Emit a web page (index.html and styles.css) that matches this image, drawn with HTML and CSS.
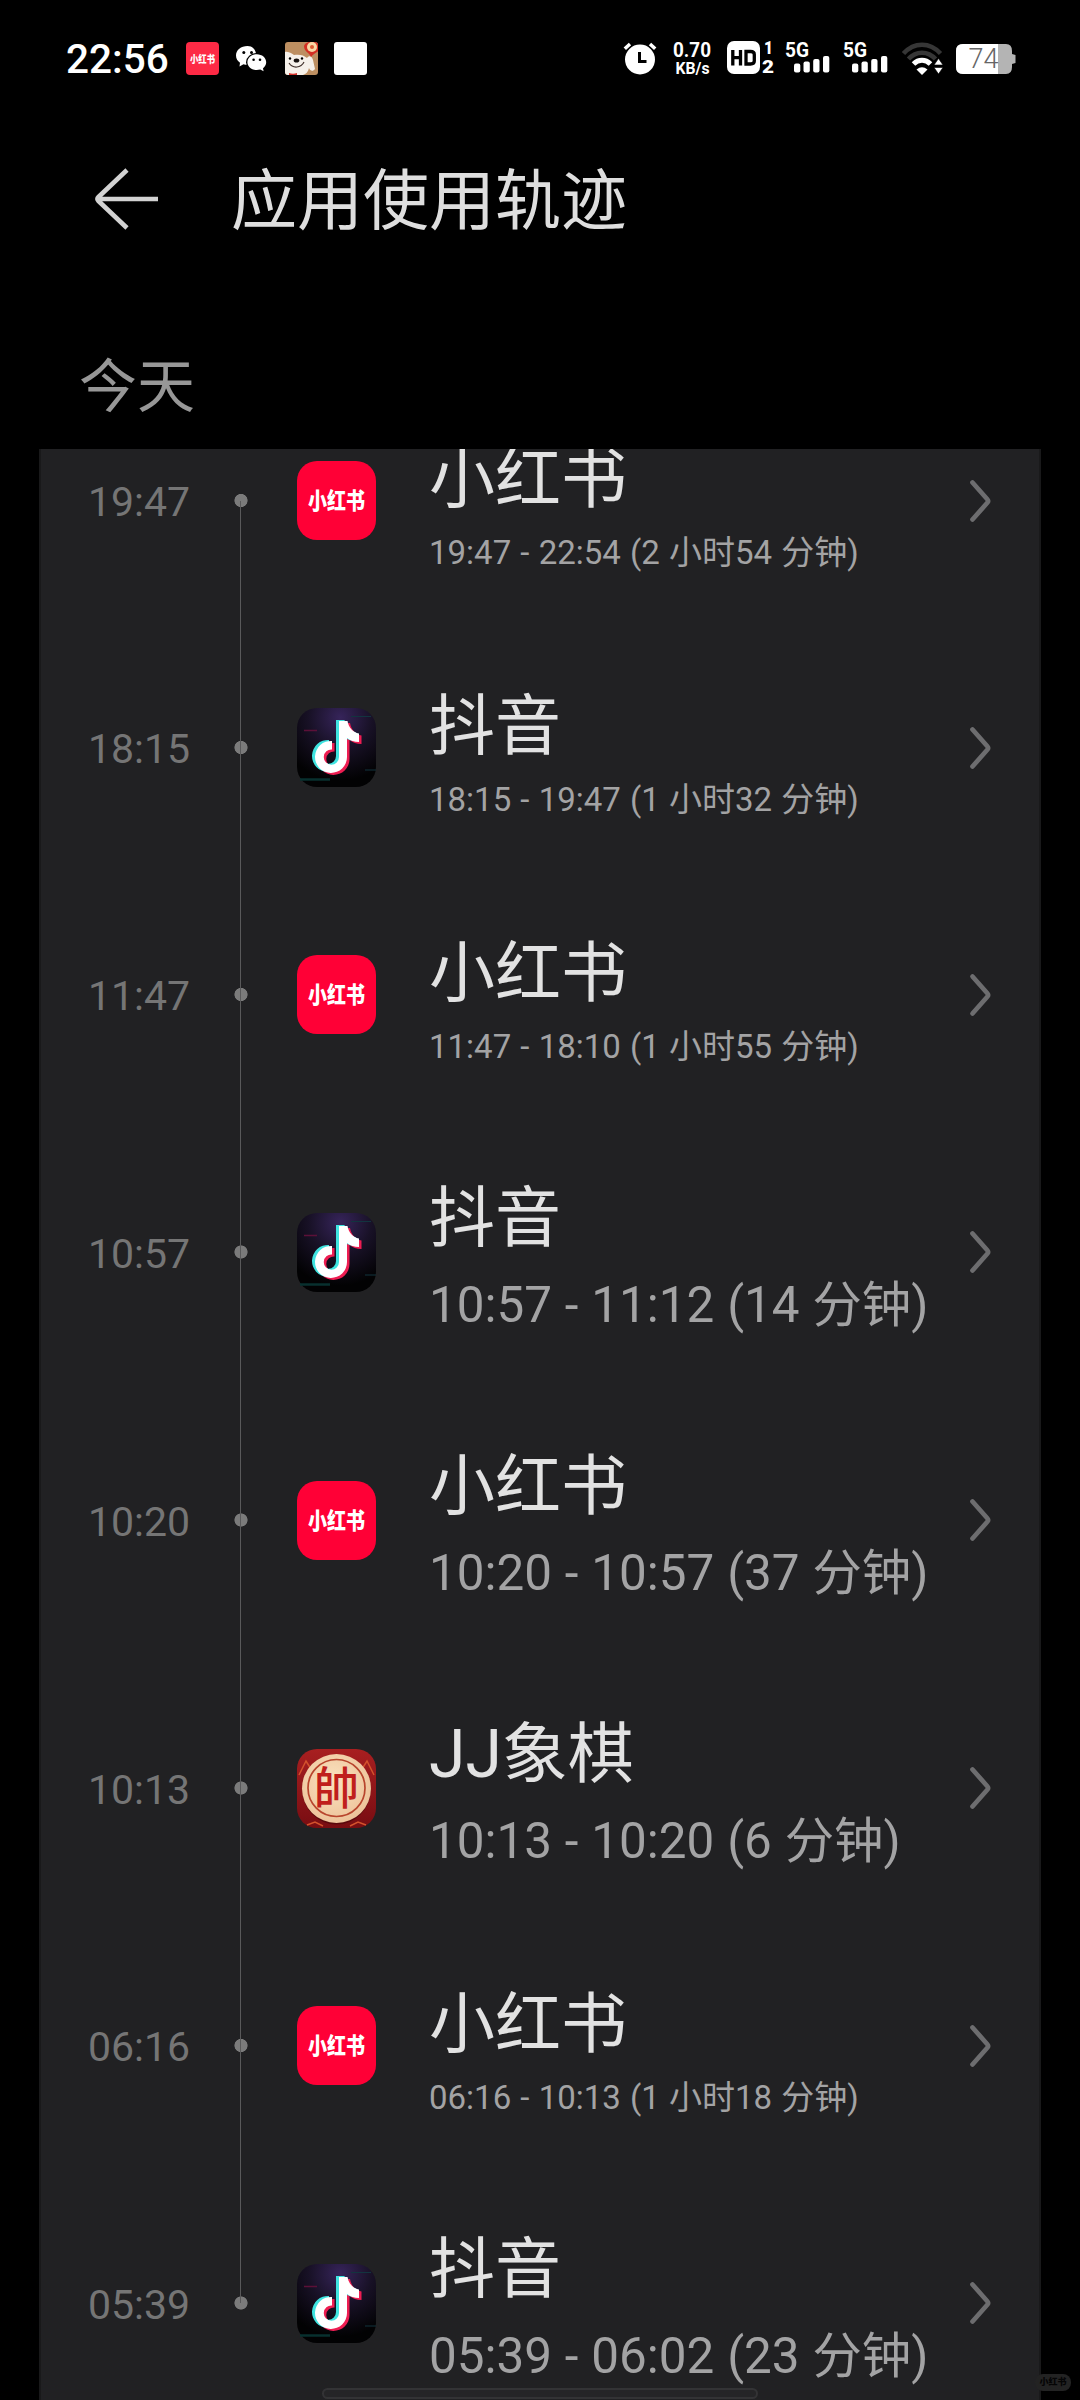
FILE: index.html
```html
<!DOCTYPE html>
<html lang="zh-CN">
<head>
<meta charset="utf-8">
<title>应用使用轨迹</title>
<link rel="stylesheet" href="styles.css">
</head>
<body>
<svg class="defs" width="0" height="0" aria-hidden="true">
  <defs>
    <radialGradient id="dyBg" cx="0.55" cy="0.12" r="0.8">
      <stop offset="0" stop-color="#36245a"/>
      <stop offset="0.5" stop-color="#181126"/>
      <stop offset="1" stop-color="#020203"/>
    </radialGradient>
    <radialGradient id="wood" cx="0.45" cy="0.4" r="0.6">
      <stop offset="0" stop-color="#fbe3c0"/>
      <stop offset="1" stop-color="#edc39a"/>
    </radialGradient>
    <linearGradient id="chessBg" x1="0" y1="0" x2="0" y2="1">
      <stop offset="0" stop-color="#a81f20"/>
      <stop offset="1" stop-color="#780d12"/>
    </linearGradient>
    <path id="note" d="M42 13h8.500c1 6.500 5.500 11.500 11.500 12.500v8.500c-5 0-8.500-1.500-12-4v19a16 16 0 1 1-15-16v8.500a7.600 7.600 0 1 0 7 7.500z"/>
    <symbol id="xhs" viewBox="0 0 79 79">
      <rect width="79" height="79" rx="20" fill="#ff0036"/>
      <text x="11" y="48" class="xhs-word" textLength="57" lengthAdjust="spacingAndGlyphs">小红书</text>
    </symbol>
    <symbol id="douyin" viewBox="0 0 79 79">
      <rect width="79" height="79" rx="20" fill="url(#dyBg)"/>
      <path d="M3 71.500h30" stroke="#08302f" stroke-width="2.500"/>
      <path d="M68 62h11M54 8.500h20" stroke="#12343f" stroke-width="1.200"/>
      <path d="M7 22.500h13" stroke="#5c1038" stroke-width="1.500"/>
      <use href="#note" x="2.500" y="2" fill="#ee1d52"/>
      <use href="#note" x="-3" y="-1" fill="#3fe3e0"/>
      <use href="#note" fill="#fff"/>
    </symbol>
    <symbol id="chess" viewBox="0 0 79 79">
      <rect width="79" height="79" rx="20" fill="url(#chessBg)"/>
      <path d="M2 26l7-14 5 8M77 26l-7-14-5 8M10 76l8-3 8 4M69 76l-8-3-8 4" fill="none" stroke="#d3522c" stroke-width="1.500"/>
      <circle cx="39.500" cy="41.500" r="34" fill="#5b090c"/>
      <circle cx="39.500" cy="39.500" r="34.500" fill="url(#wood)"/>
      <circle cx="39.500" cy="39" r="28.500" fill="none" stroke="#b8452d" stroke-width="1.700"/>
      <text x="39.500" y="56" class="chess-word" text-anchor="middle">帥</text>
    </symbol>
    <symbol id="chevron" viewBox="0 0 24 44">
      <path d="M3.500 3.500 18.300 20.200q1.600 1.800 0 3.600L3.500 40.500" fill="none" stroke="#6d6d6f" stroke-width="4.700" stroke-linecap="round"/>
    </symbol>
    <symbol id="signal" viewBox="0 0 45 33">
      <text x="0" y="15.500" class="net" textLength="24" lengthAdjust="spacingAndGlyphs">5G</text>
      <rect x="9" y="22.500" width="6.300" height="9" rx="2"/>
      <rect x="18.500" y="20.500" width="6.300" height="11" rx="2"/>
      <rect x="28.200" y="18" width="6.300" height="13.500" rx="2"/>
      <rect x="38" y="15" width="6.300" height="16.500" rx="2"/>
    </symbol>
  </defs>
</svg>

<header class="status">
  <div class="clock">22:56</div>
  <div class="notices">
    <svg width="33" height="33" viewBox="0 0 33 33">
      <rect width="33" height="33" rx="4" fill="#fd2a45"/>
      <text x="4" y="20.500" class="xhs-mini" textLength="25" lengthAdjust="spacingAndGlyphs">小红书</text>
    </svg>
    <svg width="33" height="33" viewBox="0 0 33 33">
      <path d="M12.500 4C6 4 1 8 1 13.500c0 3 1.600 5.600 4 7.300L4.500 24.500l4-2.200c1.500.4 3 .6 4.500.5C24 22.500 24 4 12.500 4z" fill="#fff"/>
      <ellipse cx="21.800" cy="20.300" rx="10.800" ry="9.300"/>
      <path d="M21.800 12.300c5.200 0 9.400 3.600 9.400 8 0 2.400-1.200 4.500-3.200 6l.6 3-3.300-1.700c-7.500 1.900-12.900-2.300-12.900-7.300 0-4.400 4.200-8 9.400-8z" fill="#fff"/>
      <circle cx="8.800" cy="10.500" r="1.500"/><circle cx="16.500" cy="10.500" r="1.500"/><circle cx="18.600" cy="17.700" r="1.300"/><circle cx="25" cy="17.700" r="1.300"/>
    </svg>
    <svg width="33" height="33" viewBox="0 0 33 33">
      <clipPath id="dogClip"><rect width="33" height="33" rx="3"/></clipPath>
      <g clip-path="url(#dogClip)">
        <rect width="33" height="33" fill="#bd8f61"/>
        <path d="M0 10c4-1 7 2 9 3 5-1 10 0 13 3 2-3 5-2 6 2l2 9c-2 3-5 2-6-1-1 4-3 6-6 7H0z" fill="#f6f1ea"/>
        <path d="M4 21c4 6 12 5 15-1" fill="none" stroke="#40302a" stroke-width="1.200"/>
        <ellipse cx="11.500" cy="18.500" rx="2.800" ry="2" fill="#17120f"/>
        <circle cx="5" cy="16.500" r="1.200"/><circle cx="17" cy="16.500" r="1.200"/>
        <path d="M4 31q4 1.500 8 0v3H4z" fill="#d6322b"/>
        <path d="M19 4C20-1 33-3 35 4c1 6-6 6-9 11-1-4-7-5-7-11z" fill="#d32f24"/>
        <circle cx="27" cy="5" r="5" fill="#f8d7a4"/><circle cx="27" cy="5" r="2" fill="#dc5b32"/>
      </g>
    </svg>
    <svg width="33" height="33" viewBox="0 0 33 33"><rect width="33" height="33" rx="3" fill="#fff"/></svg>
  </div>
  <div class="system">
    <svg class="alarm" width="34" height="33" viewBox="0 0 34 33">
      <circle cx="17" cy="17.500" r="15" fill="#fff"/>
      <path d="M1.800 6.800 7 2M32.200 6.800 27 2" stroke="#fff" stroke-width="3.500"/>
      <path d="M16.500 10v9.500h7" fill="none" stroke="#000" stroke-width="3"/>
    </svg>
    <svg class="speed" width="40" height="36" viewBox="0 0 40 36">
      <text x="1" y="15.800" class="rate" textLength="38" lengthAdjust="spacingAndGlyphs">0.70</text>
      <text x="3.500" y="33.300" class="unit" textLength="34" lengthAdjust="spacingAndGlyphs">KB/s</text>
    </svg>
    <svg class="hd" width="48" height="34" viewBox="0 0 48 34">
      <rect width="33" height="33" rx="7" fill="#fff"/>
      <path d="M5.800 9v15.500M13.500 9v15.500M5.800 16.700h7.700M19 10.500h4.500q3.800 0 3.800 3V20q0 3-3.800 3H19z" fill="none" stroke="#000" stroke-width="3.300"/>
      <text x="37" y="13" class="sim" textLength="9" lengthAdjust="spacingAndGlyphs">1</text>
      <text x="35" y="32" class="sim" textLength="12" lengthAdjust="spacingAndGlyphs">2</text>
    </svg>
    <svg class="sig" width="45" height="33" fill="#fff"><use href="#signal"/></svg>
    <svg class="sig second" width="45" height="33" fill="#fff"><use href="#signal"/></svg>
    <svg class="wifi" width="41" height="33" viewBox="0 0 41 33">
      <g fill="none" stroke-width="4.500">
        <path d="M1.500 11.500C12-.300 28-.300 38.500 11.500" stroke="#363636"/>
        <path d="M6.500 17C14 8.500 26 8.500 33.500 17" stroke="#363636"/>
        <path d="M11.500 22c5-5 12-5 17 0" stroke="#fff" stroke-width="5"/>
      </g>
      <path d="M14.500 27.500q5.500-4.500 11 0L20 33z" fill="#fff"/>
      <path d="M36.500 16.500l4.500 6.500h-9zM36.500 32l4.500-6.500h-9z" fill="#fff" stroke="#000" stroke-width=".6"/>
    </svg>
    <svg class="battery" width="60" height="31" viewBox="0 0 60 31">
      <clipPath id="batClip"><path d="M7 0h43q6 0 6 7v3l3.500 1v8L56 20v3q0 7-6 7H7q-7 0-7-7V7q0-7 7-7z"/></clipPath>
      <g clip-path="url(#batClip)"><rect width="60" height="31" fill="#b4b4b4"/><rect width="42" height="31" fill="#fff"/></g>
      <text x="12.500" y="24.300" class="level" textLength="30" lengthAdjust="spacingAndGlyphs">74</text>
    </svg>
  </div>
</header>

<div class="titlebar">
  <svg width="66" height="64" viewBox="0 0 66 64">
    <path d="M32 3 3.500 30q-2 2 0 4L32 61M3 32h60" fill="none" stroke="#d2d2d2" stroke-width="4.600"/>
  </svg>
  <h1>应用使用轨迹</h1>
</div>
<h2 class="day">今天</h2>

<main class="panel">
  <ul class="timeline">
    <li class="row"><time>19:47</time><span class="rail"></span><svg class="app"><use href="#xhs"/></svg><div class="info"><b>小红书</b><small>19:47 - 22:54 (2 小时54 分钟)</small></div><svg class="go"><use href="#chevron"/></svg></li>
    <li class="row"><time>18:15</time><span class="rail"></span><svg class="app"><use href="#douyin"/></svg><div class="info"><b>抖音</b><small>18:15 - 19:47 (1 小时32 分钟)</small></div><svg class="go"><use href="#chevron"/></svg></li>
    <li class="row"><time>11:47</time><span class="rail"></span><svg class="app"><use href="#xhs"/></svg><div class="info"><b>小红书</b><small>11:47 - 18:10 (1 小时55 分钟)</small></div><svg class="go"><use href="#chevron"/></svg></li>
    <li class="row large"><time>10:57</time><span class="rail"></span><svg class="app"><use href="#douyin"/></svg><div class="info"><b>抖音</b><small>10:57 - 11:12 (14 分钟)</small></div><svg class="go"><use href="#chevron"/></svg></li>
    <li class="row large"><time>10:20</time><span class="rail"></span><svg class="app"><use href="#xhs"/></svg><div class="info"><b>小红书</b><small>10:20 - 10:57 (37 分钟)</small></div><svg class="go"><use href="#chevron"/></svg></li>
    <li class="row large"><time>10:13</time><span class="rail"></span><svg class="app"><use href="#chess"/></svg><div class="info"><b>JJ象棋</b><small>10:13 - 10:20 (6 分钟)</small></div><svg class="go"><use href="#chevron"/></svg></li>
    <li class="row"><time>06:16</time><span class="rail"></span><svg class="app"><use href="#xhs"/></svg><div class="info"><b>小红书</b><small>06:16 - 10:13 (1 小时18 分钟)</small></div><svg class="go"><use href="#chevron"/></svg></li>
    <li class="row large"><time>05:39</time><span class="rail"></span><svg class="app"><use href="#douyin"/></svg><div class="info"><b>抖音</b><small>05:39 - 06:02 (23 分钟)</small></div><svg class="go"><use href="#chevron"/></svg></li>
  </ul>
</main>
<div class="home-bar"></div>
<div class="mark">小红书</div>
</body>
</html>
```
FILE: styles.css
```css
* { box-sizing: border-box; margin: 0; padding: 0; }

body {
  position: relative;
  display: flex;
  flex-direction: column;
  width: 1080px;
  height: 2400px;
  overflow: hidden;
  background: #000;
  color: #e0e0e0;
  font-family: Roboto, "Noto Sans CJK SC", sans-serif;
}

svg { display: block; flex: none; }
.defs { position: absolute; }

/* status bar */
.status {
  display: flex;
  flex: none;
  align-items: flex-start;
  height: 130px;
  padding-top: 41px;
  color: #fff;
}
.clock {
  width: 120px;
  margin-left: 66px;
  padding-top: 1px;
  font-size: 40.500px;
  font-weight: 500;
  line-height: 34px;
}
.notices { display: flex; gap: 16.300px; padding-top: 1px; }
.system { display: flex; margin-left: 256px; }
.alarm { margin-top: 1px; }
.speed { margin-left: 15px; }
.rate, .unit { fill: #fff; font: 700 19.500px Roboto, sans-serif; }
.unit { font-size: 17px; }
.hd { margin-left: 15px; }
.sig { margin-left: 10px; }
.second { margin-left: 13px; }
.wifi { margin: 1px 0 0 14px; }
.battery { margin: 3px 0 0 13px; }
.xhs-word, .xhs-mini { fill: #fff; font-family: "Noto Sans CJK SC", sans-serif; font-weight: 900; }
.xhs-word { font-size: 22.500px; }
.xhs-mini { font-size: 10.500px; }
.chess-word { fill: #c01f1c; font: 500 45px "Noto Sans CJK TC", sans-serif; }
.net { font: 700 20px Roboto, sans-serif; }
.sim { fill: #fff; font: 900 18px Roboto, sans-serif; }
.level { fill: #666; font: 300 27px Roboto, sans-serif; }

/* header */
.titlebar {
  display: flex;
  flex: none;
  align-items: center;
  gap: 70px;
  height: 138px;
  padding-left: 95px;
}
h1 { padding-top: 6px; color: #dedede; font-size: 66px; font-weight: 400; line-height: 80px; }
.day {
  flex: none;
  height: 181px;
  padding: 79px 0 0 79px;
  color: #979797;
  font-size: 58px;
  font-weight: 400;
  line-height: 80px;
}

/* timeline */
.panel {
  flex: 1;
  min-height: 0;
  margin: 0 39px;
  overflow: hidden;
  border: solid #19191a;
  border-width: 0 2px;
  background: #212123;
}
.timeline { margin-top: -72px; list-style: none; }
.row { display: flex; align-items: center; height: 247px; padding-left: 47px; }
.row.large { height: 268px; }
time { width: 140.500px; padding-top: 3px; color: #757575; font-size: 41px; line-height: 48px; }
.rail {
  display: flex;
  flex-direction: column;
  align-items: center;
  align-self: stretch;
  width: 24px;
  background: radial-gradient(circle at 50% 50%, #7b7b7b 6.200px, transparent 6.900px);
}
.rail::before, .rail::after { content: ""; flex: 1; width: 1px; background: #59595a; }
.row:first-child .rail::before, .row:last-child .rail::after { background: none; }
.app { width: 79px; height: 79px; margin-left: 44.500px; }
.info { flex: 1; margin-left: 53px; white-space: nowrap; }
b, small { display: block; font-weight: 400; }
b { color: #e2e2e2; font-size: 66px; line-height: 88px; }
small {
  margin: 7px 0 -9px;
  color: #a3a3a4;
  font-size: 33px;
  line-height: 44px;
  word-spacing: 1px;
}
.large small { margin: 9px 0 -9px; font-size: 49.400px; line-height: 66px; word-spacing: .6px; }
.go { width: 24px; height: 44px; margin-right: 46px; }

/* overlays */
.home-bar {
  position: absolute;
  bottom: 1px;
  left: 322px;
  width: 436px;
  height: 11px;
  border: 2px solid #333335;
  border-radius: 6px;
  background: #252527;
}
.mark {
  position: absolute;
  right: 9px;
  bottom: 9px;
  width: 36px;
  height: 17px;
  border-radius: 8px;
  background: #232323;
  color: #050505;
  font: 900 9px/16px "Noto Sans CJK SC", sans-serif;
  text-align: center;
}
```
